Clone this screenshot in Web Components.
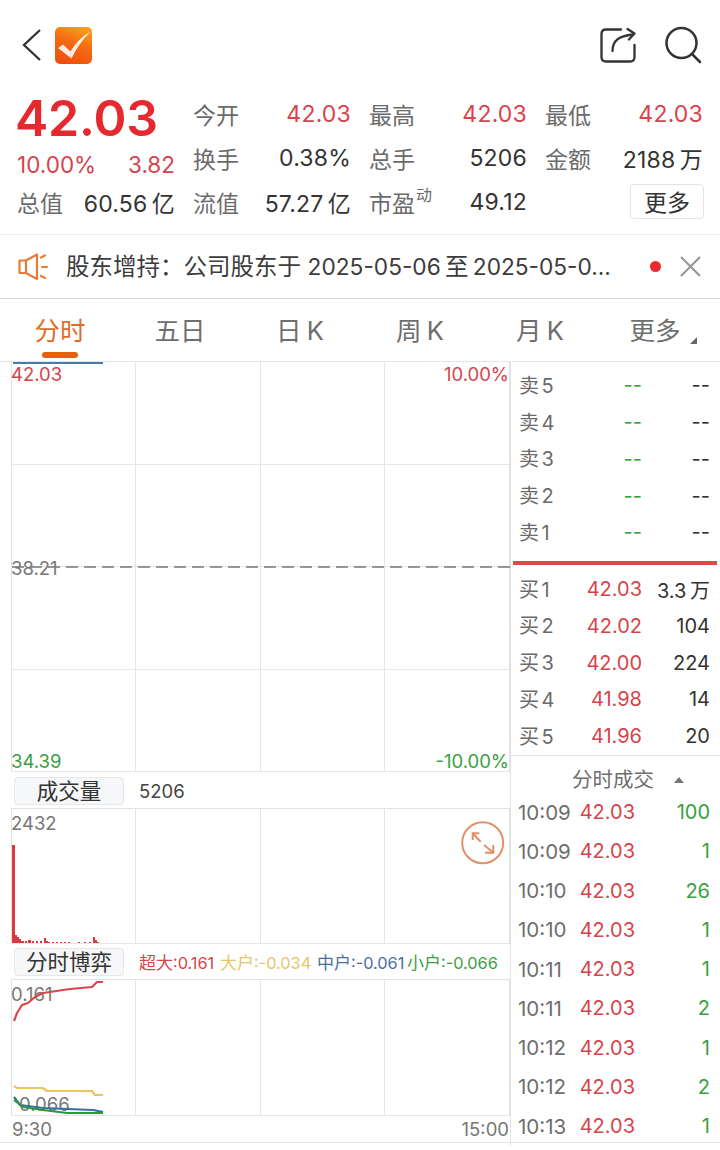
<!DOCTYPE html>
<html lang="zh"><head><meta charset="utf-8"><title>42.03</title>
<style>
html,body{margin:0;padding:0;background:#fff}
body{width:720px;height:1150px;overflow:hidden;font-family:Inter,"Noto Sans CJK SC",sans-serif;color:#333}
</style></head><body>
<x-nav></x-nav>
<x-quote></x-quote>
<x-notice></x-notice>
<x-tabs></x-tabs>
<x-board>
  <x-charts slot="left"></x-charts>
  <x-depth slot="right"></x-depth>
  <x-trades slot="right"></x-trades>
</x-board>
<script>
const RED='#d6444b',GREEN='#3a9f42',TXT='#333',LBL='#6b6b6b';
function def(name,css,html){
  customElements.define(name,class extends HTMLElement{
    connectedCallback(){
      if(this.shadowRoot)return;
      const r=this.attachShadow({mode:'open'});
      const h=typeof html==='function'?html(this):html;
      r.innerHTML='<style>'+css+'</style>'+h;
    }
  });
}
def('x-nav',`:host{display:flex;align-items:center;height:90px;box-sizing:border-box;padding:0 18px 0 20px}
svg{display:block}.sp{flex:1}.logo{margin-left:12px;width:37px;height:37px;border-radius:5px;overflow:hidden}`,
`<svg width="23" height="34" viewBox="0 0 23 34"><path d="M20 2 L4 17 L20 32" fill="none" stroke="#333" stroke-width="2.3"/></svg>
<svg class="logo" viewBox="0 0 37 37"><defs><linearGradient id="g" x1=".7" y1="0" x2=".3" y2="1"><stop offset="0" stop-color="#fb9d1c"/><stop offset=".45" stop-color="#f56a12"/><stop offset="1" stop-color="#ef4f0e"/></linearGradient></defs><rect width="37" height="37" fill="url(#g)"/><path d="M3 21 L8 17.5 L15.5 24.5 C20 17 26 10 35 5 C27 13 21 22 16.5 31.5 Z" fill="#fff" opacity=".88"/></svg>
<div class="sp"></div>
<svg width="38" height="38" viewBox="0 0 38 38" style="margin-right:28px"><g fill="none" stroke="#333" stroke-width="2.300" stroke-linecap="round" stroke-linejoin="round"><path d="M23 3.5 H8 Q3.5 3.5 3.5 8 V31 Q3.5 35.5 8 35.5 H32 Q36.5 35.5 36.5 31 V19"/><path d="M14.5 25 C14.5 15 20 10 35 8.5"/><path d="M29.5 3 L36.500 7.500 L31 13.500"/></g></svg>
<svg width="38" height="40" viewBox="0 0 38 40"><g fill="none" stroke="#333" stroke-width="2.500" stroke-linecap="round"><circle cx="17.500" cy="18" r="15"/><path d="M28 29 L36 37"/></g></svg>`);

def('x-stat',`:host{display:flex;justify-content:space-between;align-items:center;height:44px;white-space:nowrap}
.l{font-size:23px;color:${LBL}}.v{font-size:23px;letter-spacing:.2px;color:${TXT}}.v.r{color:${RED}}
sup{font-size:16px;line-height:0;position:relative;top:-2px;vertical-align:super;margin-left:1px}
.btn{width:74px;height:35px;box-sizing:border-box;border:1px solid #e4e4e4;border-radius:4px;font-size:23px;color:#333;display:flex;align-items:center;justify-content:center;margin:0 -1px 2px 0}`,
e=>{
 const l=e.getAttribute('l')||'',s=e.getAttribute('sup');
 if(e.hasAttribute('btn'))return `<span></span><span class="btn">${e.getAttribute('btn')}</span>`;
 return `<span class="l">${l}${s?`<sup>${s}</sup>`:''}</span><span class="v ${e.hasAttribute('red')?'r':''}">${e.getAttribute('v')}</span>`;
});

def('x-quote',`:host{display:flex;gap:18px;height:145px;box-sizing:border-box;padding:2px 17px 0;border-bottom:1px solid #eee}
.left{width:158px;flex:none}.big{font-size:50px;font-weight:600;letter-spacing:-.2px;margin-left:-2px;color:#e6282f;height:53px;line-height:53px;white-space:nowrap}
.r2{display:flex;justify-content:space-between;align-items:center;height:39px;color:${RED};font-size:22.500px}
.col{flex:158px 0 0}
.r3{display:flex;justify-content:space-between;align-items:center;height:36px;white-space:nowrap}
.r3 .l{font-size:23px;color:${LBL}}.r3 .v{font-size:23px;letter-spacing:.2px;color:${TXT}}`,
`<div class="left"><div class="big">42.03</div><div class="r2"><span>10.00%</span><span>3.82</span></div><div class="r3"><span class="l">总值</span><span class="v">60.56&thinsp;亿</span></div></div>
<div class="col"><x-stat l="今开" v="42.03" red></x-stat><x-stat l="换手" v="0.38%"></x-stat><x-stat l="流值" v="57.27&thinsp;亿"></x-stat></div>
<div class="col"><x-stat l="最高" v="42.03" red></x-stat><x-stat l="总手" v="5206"></x-stat><x-stat l="市盈" sup="动" v="49.12"></x-stat></div>
<div class="col"><x-stat l="最低" v="42.03" red></x-stat><x-stat l="金额" v="2188&thinsp;万"></x-stat><x-stat btn="更多"></x-stat></div>`);

def('x-notice',`:host{display:flex;align-items:center;height:64px;box-sizing:border-box;padding:0 18px;border-bottom:1px solid #d9d9d9}
.t{flex:1;margin:0 0 4px 18px;font-size:23.500px;color:#3c3c3c;white-space:nowrap;overflow:hidden}
.t span{font-size:22.700px}
.dot{width:11px;height:11px;border-radius:50%;background:#ec2a2e;margin-right:19px}svg{display:block;flex:none}`,
`<svg width="30" height="28" viewBox="0 0 30 28"><g fill="none" stroke="#ea7c3a" stroke-width="2.200" stroke-linejoin="round" stroke-linecap="round"><path d="M1.500 7.500 H8 V20 H1.500 Z"/><path d="M8 7.500 L19 1.500 V26 L8 20"/><path d="M23 4.500 L27 2.500 M24 14 H29 M23 23 L27 25"/></g></svg>
<div class="t">股东增持：公司股东于 <span>2025-05-06</span>&thinsp;至&thinsp;<span>2025-05-0...</span></div><div class="dot"></div>
<svg width="21" height="21" viewBox="0 0 21 21" style="margin-right:1px"><path d="M1 1 L20 20 M20 1 L1 20" stroke="#969696" stroke-width="2" fill="none"/></svg>`);

def('x-tabs',`:host{display:grid;grid-template-columns:repeat(6,120px);height:63px;box-sizing:border-box;border-bottom:1px solid #e6e6e6}
div{position:relative;text-align:center;font-size:25.5px;line-height:64px;color:#6e6e6e;white-space:nowrap;word-spacing:-2px}
.on{color:#dd6d2b}.on::after{content:"";position:absolute;left:42px;top:53px;width:36px;height:5.500px;border-radius:3px;background:#e2610f}
.more{padding-right:10px;box-sizing:border-box}.more::after{content:"";position:absolute;left:90px;top:38px;border:solid transparent;border-width:0 0 7px 7px;border-bottom-color:#666}`,
`<div class="on">分时</div><div>五日</div><div>日 K</div><div>周 K</div><div>月 K</div><div class="more">更多</div>`);

def('x-board',`:host{display:grid;grid-template-columns:510px 210px;height:780px;border-bottom:1px solid #e6e6e6}
.l{padding-left:11px;min-width:0}.r{border-left:1px solid #e2e2e2}`,
`<div class="l"><slot name="left"></slot></div><div class="r"><slot name="right"></slot></div>`);

def('x-plot',`:host{display:block;position:relative;box-sizing:border-box;border-left:1px solid #e2e2e2;border-right:1px solid #e2e2e2}
.g{display:grid;grid-template-columns:repeat(4,1fr);height:100%;box-sizing:border-box}
.g i{border-right:1px solid #e6e6e6;border-bottom:1px solid #e6e6e6;display:block}.g i:nth-child(4n){border-right:0}`,
e=>{const n=+(e.getAttribute('rows')||1);return `<div class="g" style="grid-template-rows:repeat(${n},1fr)">${'<i></i>'.repeat(n*4)}</div><slot></slot>`;});

def('x-tag',`:host{position:absolute;font-size:18.500px;line-height:22px;white-space:nowrap}`,`<slot></slot>`);

def('x-chartbar',`:host{display:flex;align-items:center;box-sizing:border-box;padding-left:3px;white-space:nowrap}
.b{flex:none;width:110px;height:28px;box-sizing:border-box;background:#f6f7f9;border:1px solid #e6e7ea;border-radius:4px;font-size:21.500px;line-height:26px;text-align:center;color:#333}
.s{margin-left:15px;display:flex;align-items:center}`,
e=>`<div class="b">${e.getAttribute('b')}</div><div class="s"><slot></slot></div>`);

def('x-legend',`:host{display:grid;grid-template-columns:81px 97px 90px 93px;font-size:16.300px;white-space:nowrap}`,
e=>[['超大',':0.161',RED],['大户',':-0.034','#e8c56a'],['中户',':-0.061','#4a6f9e'],['小户',':-0.066',GREEN]].map(s=>`<span style="color:${s[2]}"><span style="font-size:17px">${s[0]}</span>${s[1]}</span>`).join(''));

const vols=[[12,3,98],[15,2,8],[17,2,6],[19,2,4],[21,3,2],[25,2,2],[28,3,3],[32,2,2],[36,2,2],[40,2,2],[44,2,5],[46,2,2],[48,2,1],[52,2,1],[56,2,1],[60,2,1],[64,2,1],[68,2,1],[78,2,1],[84,2,1],[89,2,1],[93,2,6],[95,2,3],[97,2,1]];
def('x-charts',`:host{display:block}
.v{display:block;font-size:18.500px;color:#444;line-height:36px;margin-top:1px}
.ax{display:flex;justify-content:space-between;height:25px;font-size:18.500px;line-height:27px;color:#777;padding:0 1px}
svg{position:absolute;left:-1px;top:-1px;overflow:visible;pointer-events:none}`,
`<x-plot rows="4" style="height:410px">
  <svg width="10" height="10"><path d="M2 2 H92" stroke="#4a7ba6" stroke-width="2" fill="none"/><path d="M1 206 H499" stroke="#777" stroke-width="1.500" stroke-dasharray="12 6" fill="none"/></svg>
  <x-tag style="left:-1px;top:1px;color:${RED}">42.03</x-tag><x-tag style="right:0;top:1px;color:${RED}">10.00%</x-tag>
  <x-tag style="left:-1px;top:195px;color:#777">38.21</x-tag>
  <x-tag style="left:-1px;top:388px;color:${GREEN}">34.39</x-tag><x-tag style="right:0;top:388px;color:${GREEN}">-10.00%</x-tag>
</x-plot>
<x-chartbar b="成交量" style="height:36px;padding-top:1px"><span class="v">5206</span></x-chartbar>
<x-plot style="height:136px;border-top:1px solid #e2e2e2">
  <svg width="10" height="10">${vols.map(a=>`<rect x="${a[0]-11}" y="${135-a[2]}" width="${a[1]}" height="${a[2]}" fill="#d93a40"/>`).join('')}
  <g fill="none" stroke="#e0916a" stroke-width="2"><circle cx="471.700" cy="34.700" r="20.500"/><path d="M461.700 32 V25.300 H468.300 M461.700 25.300 L469.700 33.700 M473 37 L482.300 44.700 M482.300 37 V44.700 H474"/></g></svg>
  <x-tag style="left:-1px;top:3px;color:#777">2432</x-tag>
</x-plot>
<x-chartbar b="分时博弈" style="height:35px"><x-legend></x-legend></x-chartbar>
<x-plot style="height:137px;border-top:1px solid #e2e2e2">
  <x-tag style="left:-1px;top:3px;color:#777">0.161</x-tag><x-tag style="left:7px;top:113px;color:#777">0.066</x-tag>
  <svg width="10" height="10"><g fill="none" stroke-width="2.200" stroke-linejoin="round">
   <path stroke="#d9474a" d="M3 42 L6 34 L11 26 L17 24 L24 18 L32 14 L59 10 L81 8 L86 3 L92 3"/>
   <path stroke="#f0c45c" d="M3 107 L6 109 L32 109 L36 112 L81 112 L84 116 L92 116"/>
   <path stroke="#3a6ea5" d="M3 118 L9 126 L32 129 L82 131 L92 133"/>
   <path stroke="#2a9a3c" d="M3 121 L12 128 L32 131 L56 134 L92 134"/></g></svg>
</x-plot>
<div class="ax"><span>9:30</span><span>15:00</span></div>`);

def('x-row',`:host{display:grid;box-sizing:border-box;align-items:center;white-space:nowrap}
.a{color:${LBL};font-size:20px;word-spacing:-3px}.b,.c{text-align:right;font-size:20px}
.lab{margin-bottom:2px}.time{font-size:20.500px;color:#6e6e6e}`,
e=>{const t=e.hasAttribute('trade');const pc=e.getAttribute('pc')||RED,qc=e.getAttribute('qc')||TXT;
 e.style.cssText=t?'height:39.25px;grid-template-columns:54px 63px 1fr;padding:0 10px 0 7px':'height:36.75px;grid-template-columns:60px 63px 1fr;padding:0 10px 0 8px';
 return `<span class="a ${t?'time':'lab'}">${e.getAttribute('a')}</span><span class="b" style="color:${pc}">${e.getAttribute('p')}</span><span class="c" style="color:${qc}">${e.getAttribute('q')}</span>`;});

const sell=[5,4,3,2,1].map(n=>`<x-row a="卖 ${n}" p="--" q="--" pc="${GREEN}"></x-row>`).join('');
const buy=[['42.03','3.3&thinsp;万'],['42.02','104'],['42.00','224'],['41.98','14'],['41.96','20']].map((r,i)=>`<x-row a="买 ${i+1}" p="${r[0]}" q="${r[1]}"></x-row>`).join('');
def('x-depth',`:host{display:block;height:394px;box-sizing:border-box;padding-top:5px;border-bottom:1px solid #e2e2e2}
.line{height:4px;margin:10px 3px 6px 2px;background:#e0484a}`,
`${sell}<div class="line"></div>${buy}`);

const tr=[['10:09','100'],['10:09','1'],['10:10','26'],['10:10','1'],['10:11','1'],['10:11','2'],['10:12','1'],['10:12','2'],['10:13','1']];
def('x-trades',`:host{display:block}
.h{height:36.400px;box-sizing:border-box;padding:12px 0 0 61px;display:flex;align-items:center;font-size:20.500px;line-height:22px;color:#6e6e6e;white-space:nowrap}
.h::after{content:"";margin-left:20px;border:solid transparent;border-width:0 5.500px 6px;border-bottom-color:#777}`,
`<div class="h">分时成交</div>${tr.map(r=>`<x-row trade a="${r[0]}" p="42.03" q="${r[1]}" qc="${GREEN}"></x-row>`).join('')}`);
</script>
</body></html>
